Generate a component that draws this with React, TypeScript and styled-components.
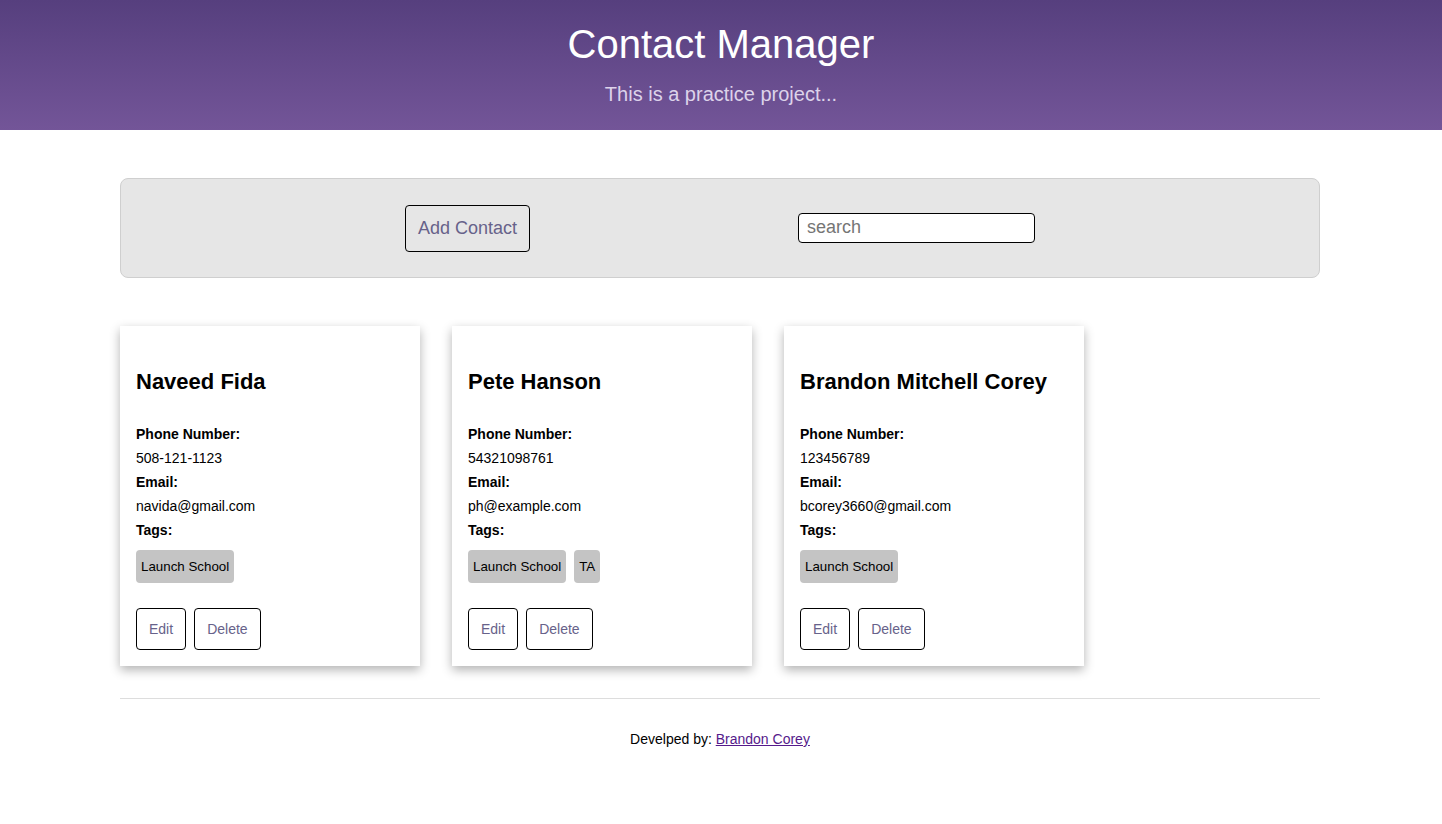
import React from "react";
import styled, { createGlobalStyle } from "styled-components";

const Global = createGlobalStyle`
  html, body { margin: 0; padding: 0; background: #fff; }
  body { font-family: "Liberation Sans", Arial, sans-serif; color: #000; }
  * { box-sizing: border-box; }
`;

const Header = styled.header`
  height: 130px;
  background: linear-gradient(to bottom, #563f7e, #735598);
  display: flex;
  flex-direction: column;
  align-items: center;
  padding-top: 20px;
`;

const Title = styled.h1`
  margin: 0;
  font-size: 40px;
  font-weight: normal;
  line-height: 48px;
  color: #fff;
`;

const Subtitle = styled.p`
  margin: 0;
  margin-top: 14px;
  font-size: 20px;
  line-height: 24px;
  color: #ddd3ea;
`;

const Main = styled.main`
  width: 1200px;
  margin: 0 120px;
`;

const Toolbar = styled.div`
  margin-top: 48px;
  height: 100px;
  background: #e6e6e6;
  border: 1px solid #cfcfcf;
  border-radius: 8px;
  display: flex;
  justify-content: center;
  align-items: center;
  gap: 268px;
  padding-bottom: 2px;
`;

const BigButton = styled.button`
  height: 47px;
  padding: 0 12px;
  font-family: "Liberation Sans", Arial, sans-serif;
  font-size: 18px;
  color: #67628a;
  background: transparent;
  border: 1px solid #000;
  border-radius: 4px;
  margin-top: 3px;
`;

const Search = styled.input`
  width: 237px;
  height: 30px;
  padding: 0 8px;
  font-family: "Liberation Sans", Arial, sans-serif;
  font-size: 18px;
  color: #333;
  border: 1px solid #000;
  border-radius: 4px;
  background: #fff;
  margin-top: 1px;
  &::placeholder { color: #757575; }
`;

const CardList = styled.div`
  display: flex;
  gap: 32px;
  margin-top: 48px;
`;

const Card = styled.div`
  width: 300px;
  height: 340px;
  background: #fff;
  box-shadow: 0 4px 10px rgba(0, 0, 0, 0.3);
  padding: 44px 16px 0;
  display: flex;
  flex-direction: column;
`;

const Name = styled.h2`
  margin: 0;
  font-size: 22px;
  line-height: 24px;
  font-weight: bold;
  margin-bottom: 28px;
`;

const Label = styled.div`
  font-size: 14px;
  line-height: 24px;
  font-weight: bold;
`;

const Value = styled.div`
  font-size: 14px;
  line-height: 24px;
`;

const Tags = styled.div`
  display: flex;
  gap: 8px;
  margin-top: 8px;
`;

const Tag = styled.span`
  height: 33px;
  display: inline-flex;
  align-items: center;
  padding: 0 5px;
  font-size: 13.33px;
  background: #c4c4c4;
  border-radius: 4px;
`;

const Actions = styled.div`
  display: flex;
  gap: 8px;
  margin-top: 25px;
`;

const SmallButton = styled.button`
  height: 42px;
  padding: 0 12px;
  font-family: "Liberation Sans", Arial, sans-serif;
  font-size: 14px;
  color: #67628a;
  background: #fff;
  border: 1px solid #000;
  border-radius: 4px;
`;

const Divider = styled.hr`
  margin: 32px 0 0;
  border: none;
  border-top: 1px solid #ddd;
`;

const Footer = styled.footer`
  text-align: center;
  font-size: 14px;
  line-height: 16px;
  margin-top: 32px;
  a { color: #551a8b; }
`;

const contacts = [
  { name: "Naveed Fida", phone: "508-121-1123", email: "navida@gmail.com", tags: ["Launch School"] },
  { name: "Pete Hanson", phone: "54321098761", email: "ph@example.com", tags: ["Launch School", "TA"] },
  { name: "Brandon Mitchell Corey", phone: "123456789", email: "bcorey3660@gmail.com", tags: ["Launch School"] },
];

export default function App() {
  return (
    <>
      <Global />
      <Header>
        <Title>Contact Manager</Title>
        <Subtitle>This is a practice project...</Subtitle>
      </Header>
      <Main>
        <Toolbar>
          <BigButton>Add Contact</BigButton>
          <Search placeholder="search" />
        </Toolbar>
        <CardList>
          {contacts.map((c) => (
            <Card key={c.name}>
              <Name>{c.name}</Name>
              <Label>Phone Number:</Label>
              <Value>{c.phone}</Value>
              <Label>Email:</Label>
              <Value>{c.email}</Value>
              <Label>Tags:</Label>
              <Tags>
                {c.tags.map((t) => (
                  <Tag key={t}>{t}</Tag>
                ))}
              </Tags>
              <Actions>
                <SmallButton>Edit</SmallButton>
                <SmallButton>Delete</SmallButton>
              </Actions>
            </Card>
          ))}
        </CardList>
        <Divider />
        <Footer>
          Develped by: <a href="#">Brandon Corey</a>
        </Footer>
      </Main>
    </>
  );
}
